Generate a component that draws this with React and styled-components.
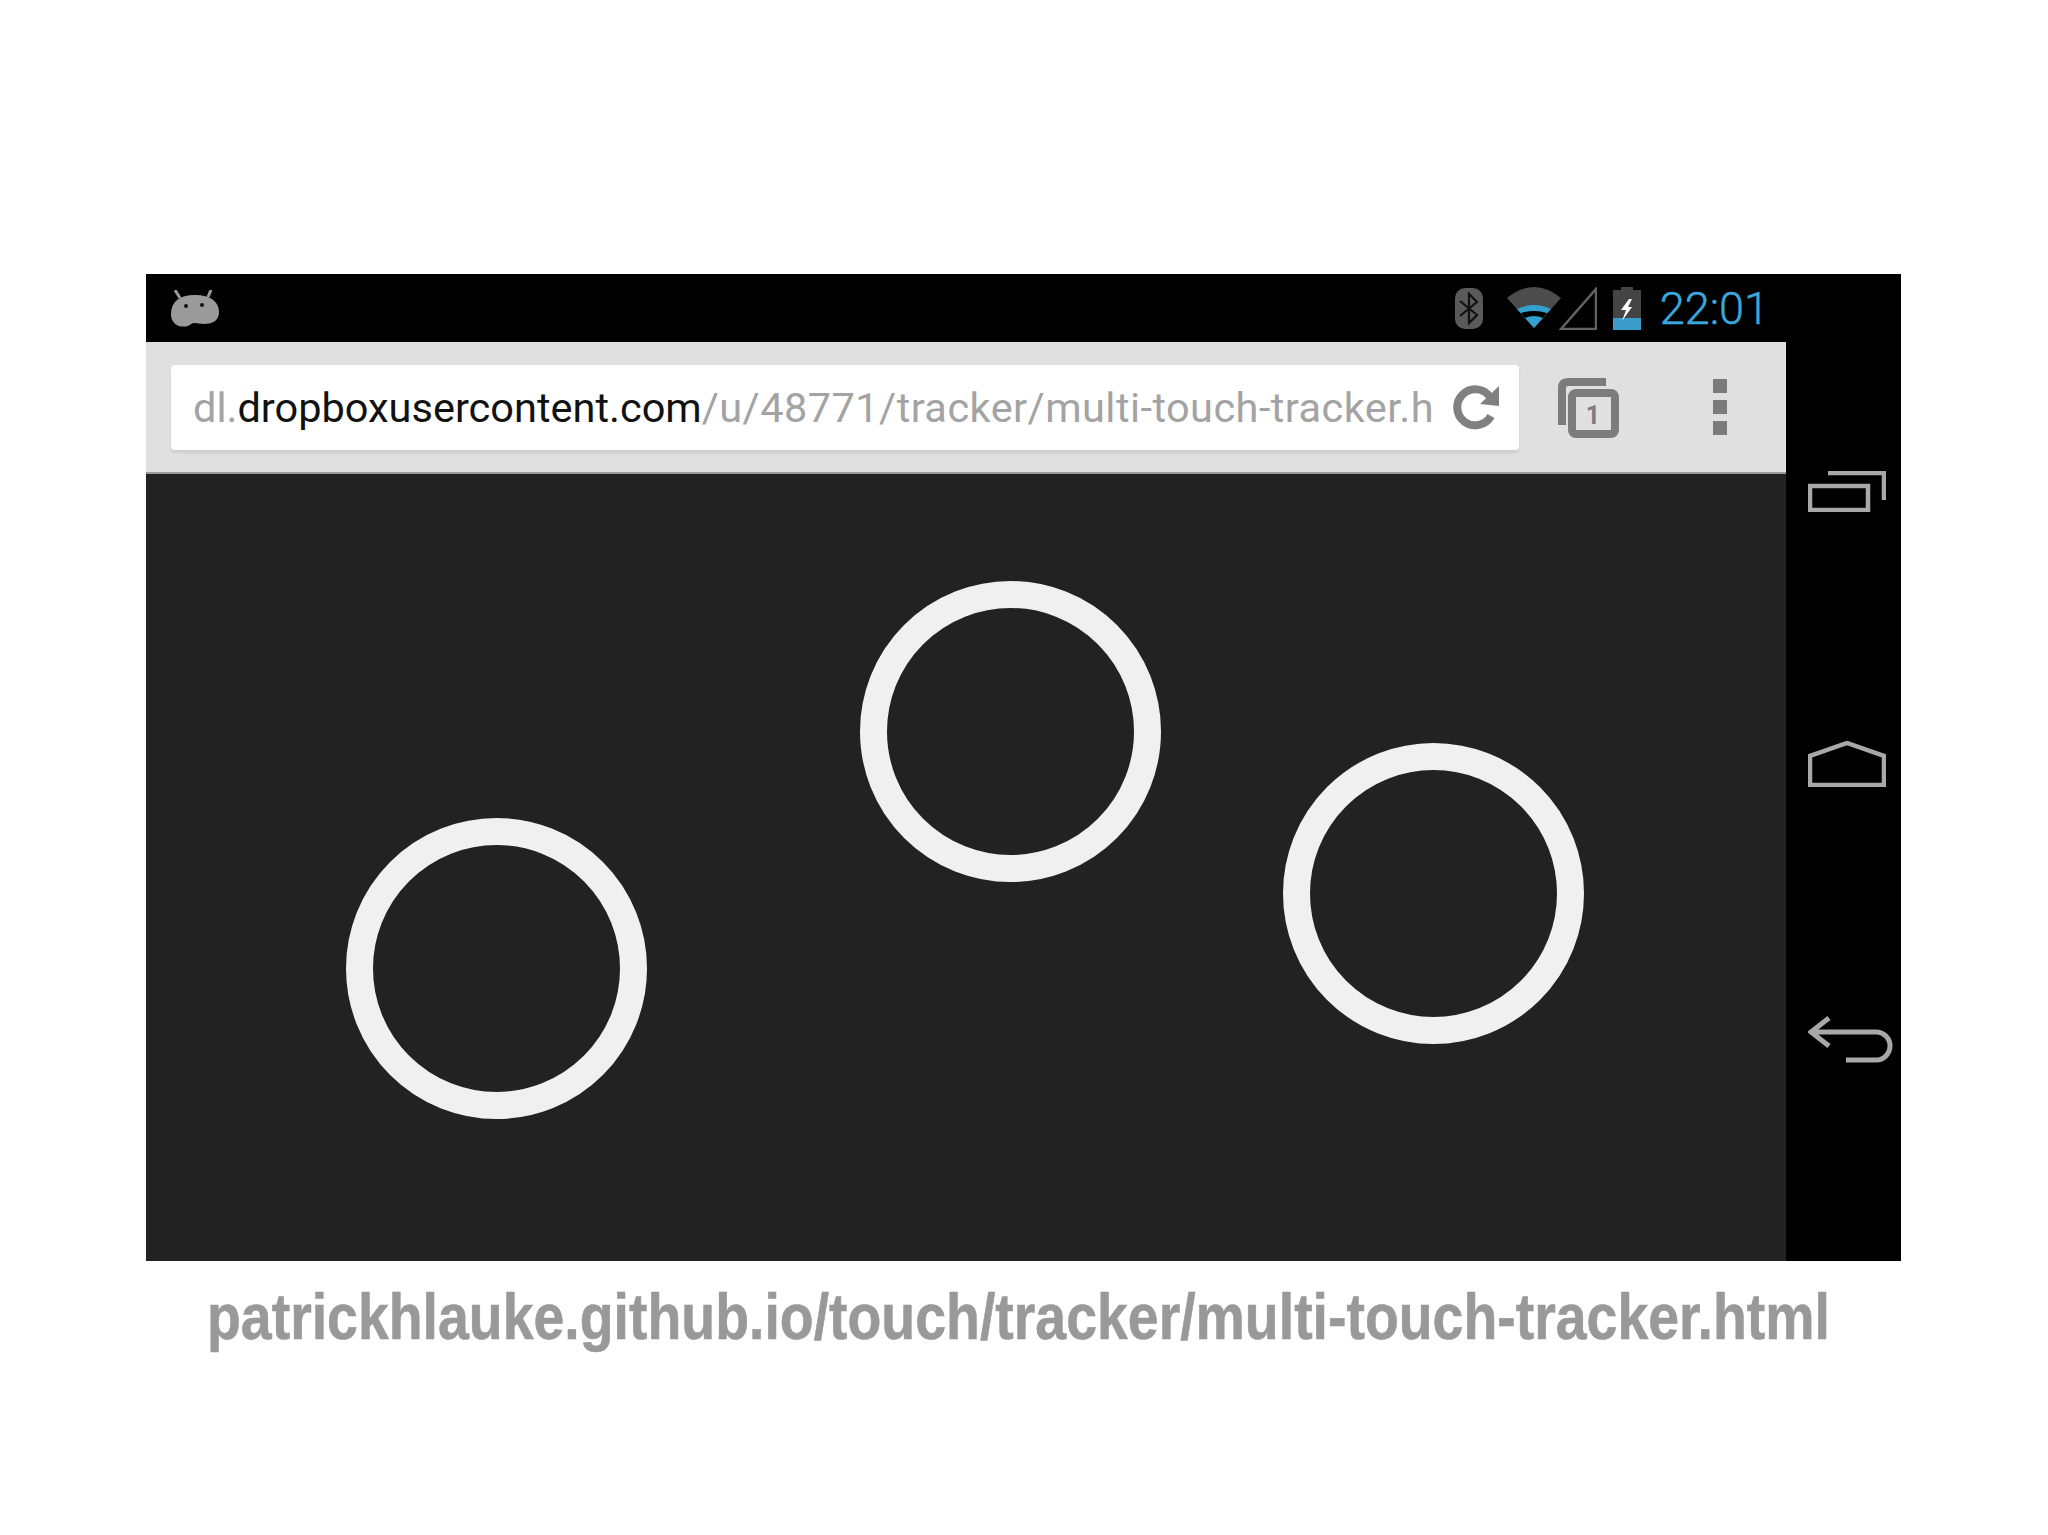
import React from "react";
import styled, { createGlobalStyle } from "styled-components";

const GlobalStyle = createGlobalStyle`
  html, body {
    margin: 0;
    padding: 0;
    background: #fff;
  }
`;

const touches = [
  { x: 496, y: 968 },
  { x: 1010, y: 731 },
  { x: 1433, y: 893 },
];

function App() {
  return (
    <Slide>
      <GlobalStyle />
      <Phone>
        <Screen>
          <StatusBar>
            <AndroidIcon />
            <StatusIcons>
              <BluetoothIcon />
              <WifiIcon />
              <SignalIcon />
              <BatteryIcon />
              <Clock>22:01</Clock>
            </StatusIcons>
          </StatusBar>
          <Toolbar>
            <UrlBox>
              <UrlText>
                dl.<strong>dropboxusercontent.com</strong>
                <span>/u/48771/tracker/multi-touch-tracker.html</span>
              </UrlText>
              <ReloadIcon />
            </UrlBox>
            <TabsIcon />
            <MenuDots>
              <i />
              <i />
              <i />
            </MenuDots>
          </Toolbar>
          <Canvas>
            {touches.map((t) => (
              <TouchRing key={t.x} $x={t.x - 146} $y={t.y - 474} />
            ))}
          </Canvas>
        </Screen>
        <NavBar>
          <RecentsIcon />
          <HomeIcon />
          <BackIcon />
        </NavBar>
      </Phone>
      <Caption>patrickhlauke.github.io/touch/tracker/multi-touch-tracker.html</Caption>
    </Slide>
  );
}

export default App;

// --- ICONS ---

function AndroidIcon() {
  return (
    <svg width="48" height="37" viewBox="0 0 48 37">
      <path d="M4 0 L9 8 M40 0 L37 7" stroke="#9a9a9a" strokeWidth="3" />
      <path
        d="M0 24 C0 12 8 5 24 5 C40 5 48 12 48 22 C48 31 41 34 33 34 C27 34 24 32 20 34 C17 37 12 37 8 36 C3 34 0 30 0 24 Z"
        fill="#9a9a9a"
      />
      <circle cx="15" cy="16" r="2" fill="#111" />
      <circle cx="31" cy="15" r="2" fill="#111" />
    </svg>
  );
}

function BluetoothIcon() {
  return (
    <svg width="28" height="41" viewBox="0 0 28 41">
      <rect width="28" height="41" rx="10" fill="#5a5a5a" />
      <path d="M5 13 L22 27 L14 35 V6 L22 14 L5 28" fill="none" stroke="#111" strokeWidth="2.2" />
    </svg>
  );
}

function WifiIcon() {
  return (
    <svg width="54" height="42" viewBox="0 0 54 42">
      <path d="M0 11 Q27 -11 54 11 L27 41 Z" fill="#4c4c4c" />
      <path d="M10 22 Q27 14 44 22 L27 41 Z" fill="#33a0cf" />
      <path d="M14 26 Q27 22 40 26 L36 31 Q27 27 18 31 Z" fill="#000" />
    </svg>
  );
}

function SignalIcon() {
  return (
    <svg width="38" height="43" viewBox="0 0 38 43">
      <path d="M2 42 L37 2 V42 Z" fill="none" stroke="#636363" strokeWidth="2.5" />
    </svg>
  );
}

function BatteryIcon() {
  return (
    <svg width="28" height="43" viewBox="0 0 28 43">
      <path d="M8 0 H20 V3 H28 V31 H0 V3 H8 Z" fill="#444" />
      <rect y="31" width="28" height="12" fill="#3a9cc9" />
      <path d="M16 12 L8 23 H13 L9 34 L19 20 H15 L19 12 Z" fill="#fff" />
    </svg>
  );
}

function ReloadIcon() {
  return (
    <svg width="46" height="45" viewBox="0 0 46 45">
      <path d="M38 31 A18 18 0 1 1 37 12" fill="none" stroke="#808080" strokeWidth="8" />
      <path d="M46 1 V21 L27 19 Z" fill="#808080" />
    </svg>
  );
}

function TabsIcon() {
  return (
    <svg width="63" height="61" viewBox="0 0 63 61">
      <path d="M5 48 V11 Q5 5 11 5 H49" fill="none" stroke="#7c7c7c" strokeWidth="8" />
      <rect x="15" y="16" width="43" height="41" rx="4" fill="#e0e0e0" stroke="#7c7c7c" strokeWidth="8" />
      <text x="36" y="47" textAnchor="middle" fontFamily="Roboto, sans-serif" fontWeight="700" fontSize="25" fill="#7c7c7c">
        1
      </text>
    </svg>
  );
}

function RecentsIcon() {
  return (
    <svg width="78" height="41" viewBox="0 0 78 41">
      <rect x="2" y="15" width="58" height="24" fill="none" stroke="#a8a8a8" strokeWidth="4.5" />
      <path d="M20 2 H76 V29" fill="none" stroke="#a8a8a8" strokeWidth="4.5" />
    </svg>
  );
}

function HomeIcon() {
  return (
    <svg width="78" height="46" viewBox="0 0 78 46">
      <path d="M39 2 L76 15 V44 H2 V15 Z" fill="none" stroke="#a8a8a8" strokeWidth="4.5" />
    </svg>
  );
}

function BackIcon() {
  return (
    <svg width="85" height="47" viewBox="0 0 85 47">
      <path d="M21 2 L3 16 L21 30 M3 16 H68 A14 14 0 0 1 68 44 H38" fill="none" stroke="#a8a8a8" strokeWidth="5" />
    </svg>
  );
}

// --- STYLES ---

const Slide = styled.div`
  width: 2048px;
  height: 1535px;
  padding: 274px 0 0 146px;
  box-sizing: border-box;
  overflow: hidden;
`;

const Phone = styled.div`
  display: flex;
  width: 1755px;
  height: 987px;
  background: #000;
`;

const Screen = styled.div`
  display: flex;
  flex-direction: column;
  width: 1640px;
`;

const StatusBar = styled.div`
  display: flex;
  align-items: center;
  justify-content: space-between;
  height: 68px;
  padding: 0 17px 0 25px;
  box-sizing: border-box;
`;

const StatusIcons = styled.div`
  display: flex;
  align-items: center;
  svg:nth-child(2) {
    margin-left: 24px;
  }
  svg:nth-child(3) {
    margin-left: -2px;
  }
  svg:nth-child(4) {
    margin-left: 16px;
  }
`;

const Clock = styled.span`
  margin-left: 19px;
  font-family: Roboto, sans-serif;
  font-weight: 300;
  font-size: 45px;
  line-height: 1;
  color: #3aa8dc;
  -webkit-text-stroke: 0.5px #3aa8dc;
`;

const Toolbar = styled.div`
  display: flex;
  align-items: center;
  height: 132px;
  padding-left: 25px;
  box-sizing: border-box;
  background: #e0e0e0;
  border-bottom: 2px solid #9b9b9b;
`;

const UrlBox = styled.div`
  display: flex;
  align-items: center;
  width: 1348px;
  height: 85px;
  padding-left: 22px;
  box-sizing: border-box;
  background: #fff;
  border-radius: 4px;
  box-shadow: 0 3px 3px #cdcdcd;
  margin-right: 38px;
`;

const UrlText = styled.div`
  width: 1241px;
  margin-right: 19px;
  overflow: hidden;
  white-space: nowrap;
  font-family: Roboto, sans-serif;
  font-size: 41.5px;
  color: #a3a3a3;
  strong {
    font-weight: 400;
    color: #111;
  }
  span {
    letter-spacing: 0.45px;
  }
`;

const MenuDots = styled.div`
  display: flex;
  flex-direction: column;
  gap: 7px;
  margin-left: 93px;
  i {
    display: block;
    width: 14px;
    height: 14px;
    background: #7c7c7c;
  }
`;

const Canvas = styled.div`
  position: relative;
  flex: 1;
  background: #222222;
`;

const TouchRing = styled.div`
  position: absolute;
  left: ${(props) => props.$x - 150.5}px;
  top: ${(props) => props.$y - 150.5}px;
  width: 301px;
  height: 301px;
  box-sizing: border-box;
  border: 27px solid #f0f0f0;
  border-radius: 50%;
`;

const NavBar = styled.div`
  display: flex;
  flex-direction: column;
  gap: 229px;
  padding: 197px 0 0 22px;
`;

const Caption = styled.div`
  width: max-content;
  margin: 19px 0 0 61px;
  font-family: "Liberation Sans", sans-serif;
  font-weight: 700;
  font-size: 64px;
  line-height: 75px;
  white-space: nowrap;
  color: #999999;
  -webkit-text-stroke: 0.6px #999999;
  transform: scaleX(0.866);
  transform-origin: left center;
`;
